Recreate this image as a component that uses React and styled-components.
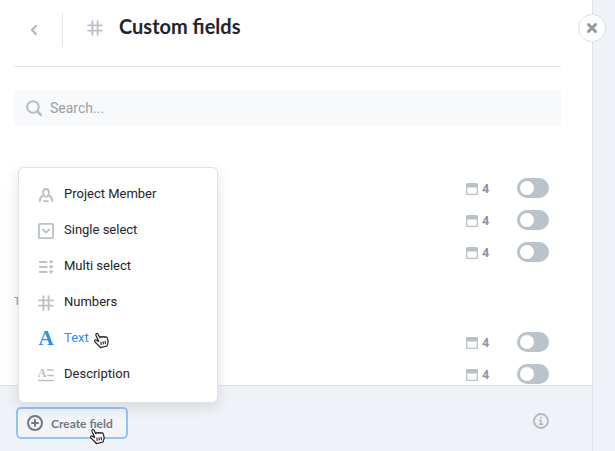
import React from "react";
import styled, { createGlobalStyle, css } from "styled-components";

const GlobalStyle = createGlobalStyle`
  *, *::before, *::after { box-sizing: border-box; }
  body {
    margin: 0;
    background: #eff3f7;
    color: #222429;
    font-family: Roboto, "Liberation Sans", sans-serif;
    font-size: 13px;
  }
  button, input { font: inherit; color: inherit; }
  svg { display: block; flex: none; overflow: visible; }
`;

const Page = styled.div`
  display: flex;
  height: 100vh;
  padding-right: 22px;
`;

const Panel = styled.section`
  position: relative;
  flex: 1;
  display: flex;
  flex-direction: column;
  min-width: 0;
  background: #fff;
  border-right: 1px solid #dce2e8;
`;

const CloseButton = styled.button`
  position: absolute;
  top: 14px;
  right: -14px;
  width: 28px;
  height: 28px;
  display: grid;
  place-items: center;
  padding: 0;
  border: 1px solid #dce0e5;
  border-radius: 50%;
  background: #fff;
  color: #8f98a3;
`;

const Header = styled.header`
  display: flex;
  align-items: center;
  margin: 0 31px 0 14px;
  padding: 9px 0 19px;
  border-bottom: 1px solid #dfe1e5;
  color: #bac2cb;
`;

const BackButton = styled.button`
  width: 49px;
  height: 34px;
  display: flex;
  align-items: center;
  margin: 4px 24px 0 0;
  padding: 0 0 0 15px;
  border: 0;
  border-right: 1px solid #dfe1e5;
  background: none;
  color: #b4bcc5;
`;

const Title = styled.h1`
  margin: 0 0 4px 16px;
  font-family: Lato, sans-serif;
  font-size: 20px;
  line-height: 24px;
  font-weight: 700;
  color: #222429;
`;

const Content = styled.div`
  flex: 1;
  min-height: 0;
  overflow: hidden;
  padding: 23px 31px 0 14px;
`;

const SearchBox = styled.label`
  display: flex;
  align-items: center;
  gap: 8px;
  height: 36px;
  padding: 0 12px;
  border-radius: 3px;
  background: #f8f9fb;
  color: #b5bcc4;
`;

const SearchInput = styled.input`
  flex: 1;
  min-width: 0;
  padding: 0;
  border: 0;
  outline: 0;
  background: none;
  font-size: 14px;
  color: #222429;
  &::placeholder { color: #9a9fa6; opacity: 1; }
`;

const FieldList = styled.ul`
  list-style: none;
  margin: 0;
  padding: 46px 12px 0 0;
  h2 + & { padding-top: 16px; }
`;

const SectionLabel = styled.h2`
  margin: 26px 0 0;
  font-size: 11px;
  line-height: 16px;
  font-weight: 500;
  color: #9aa1aa;
`;

const FieldRow = styled.li`
  display: flex;
  align-items: center;
  justify-content: flex-end;
  height: 32px;
`;

const Usage = styled.span`
  display: flex;
  align-items: center;
  gap: 4px;
  margin-right: 28px;
  padding-top: 2px;
  font-family: "Open Sans", sans-serif;
  font-size: 12px;
  line-height: 16px;
  font-weight: 700;
  color: #8c959f;
`;

const Toggle = styled.input`
  appearance: none;
  width: 32px;
  height: 20px;
  margin: 0;
  padding: 3px;
  border-radius: 10px;
  background: #bac3cb;
  &::before {
    content: "";
    display: block;
    width: 14px;
    height: 14px;
    border-radius: 50%;
    background: #fff;
  }
  &:checked { background: #2f8fea; }
  &:checked::before { margin-left: 12px; }
`;

const Footer = styled.footer`
  display: flex;
  align-items: center;
  justify-content: space-between;
  padding: 21px 43px 12px 16px;
  border-top: 1px solid #dbe1e7;
  background: #eff3f7;
`;

const CreateArea = styled.div`
  position: relative;
`;

const CreateButton = styled.button`
  height: 32px;
  display: flex;
  align-items: center;
  gap: 8px;
  padding: 0 13px 0 9px;
  border: 2px solid #93c3f7;
  border-radius: 5px;
  background: #f1f4f8;
  font-family: Lato, sans-serif;
  font-size: 12px;
  font-weight: 700;
  color: #727983;
`;

const Menu = styled.ul`
  position: absolute;
  left: 2px;
  bottom: 36px;
  width: 200px;
  margin: 0;
  padding: 8px 0 10px;
  list-style: none;
  border: 1px solid #e0e2e6;
  border-radius: 6px;
  background: #fff;
  box-shadow: 0 4px 14px rgba(50, 60, 80, 0.14);
`;

const MenuItem = styled.button`
  display: flex;
  align-items: center;
  width: 100%;
  height: 36px;
  padding: 2px 19px 0;
  border: 0;
  background: none;
  color: #bac1c9;
  ${(p) => p.$active && css`color: #2e8eea;`}
`;

const MenuText = styled.span`
  margin-left: 10px;
  padding-bottom: 3px;
  color: ${(p) => (p.$active ? "#2e8eea" : "#222429")};
`;

const MenuPointer = styled.span`
  margin: 2px 0 0 5px;
`;

const ButtonPointer = styled.span`
  position: absolute;
  right: 23px;
  bottom: -6px;
`;

const InfoButton = styled.button`
  padding: 0;
  margin-bottom: 4px;
  border: 0;
  background: none;
  color: #b5b9be;
`;

const Icon = ({ size = 16, width = 2, children }) => (
  <svg width={size} height={size} viewBox={`0 0 ${size} ${size}`} fill="none" stroke="currentColor"
    strokeWidth={width} strokeLinecap="round" strokeLinejoin="round" aria-hidden="true">
    {children}
  </svg>
);

const HashIcon = () => (
  <Icon width={1.9}><path d="M5.4 1.1v13.8M10.6 1.1v13.8M1.1 5.4h13.8M1.1 10.6h13.8" /></Icon>
);

const MemberIcon = () => (
  <Icon width={1.9}>
    <path d="M8 2C5.9 2 5.1 3.4 5.1 5.6s1.2 4.3 2.9 4.3 2.9-2.1 2.9-4.3S10.1 2 8 2Z" />
    <path d="M4.6 9C2.9 9.7 1.9 10.9 1.8 14M11.4 9c1.7.7 2.7 1.9 2.8 5" />
    <path d="M5.8 14.1h4.4" strokeWidth="1.7" />
  </Icon>
);

const SingleIcon = () => (
  <Icon width={1.9}>
    <rect x="0.9" y="0.9" width="14.2" height="14.2" rx="1" />
    <path d="m4.9 6.6 3.1 3.1 3.1-3.1" />
  </Icon>
);

const MultiIcon = () => (
  <Icon width={1.9}>
    <path d="M1.8 3h6.8M1.8 8h6.8M1.8 13h6.8" />
    <path d="M11.6 2.2h3L13.1 4ZM11.6 7.2h3L13.1 9ZM11.6 12.2h3L13.1 14Z" fill="currentColor" strokeWidth="1.2" />
  </Icon>
);

const TextIcon = () => (
  <Icon>
    <text x="8" y="14" textAnchor="middle" fill="currentColor" stroke="none"
      fontFamily="Liberation Serif, serif" fontWeight="700" fontSize="21">A</text>
  </Icon>
);

const DescriptionIcon = () => (
  <Icon width={1.7}>
    <text x="4" y="10" textAnchor="middle" fill="currentColor" stroke="none"
      fontFamily="Liberation Serif, serif" fontWeight="700" fontSize="12">A</text>
    <path d="M9.2 3h6.4M9.2 8.5h6.4M.2 13.5h15.6" strokeLinecap="butt" />
  </Icon>
);

const CardIcon = () => (
  <Icon size={12} width={1}>
    <path fill="currentColor" stroke="none" fillRule="evenodd"
      d="M1.5 0h9A1.5 1.5 0 0 1 12 1.5v9a1.5 1.5 0 0 1-1.5 1.5h-9A1.5 1.5 0 0 1 0 10.5v-9A1.5 1.5 0 0 1 1.5 0ZM1.3 4.4v5.6a.7.7 0 0 0 .7.7h8a.7.7 0 0 0 .7-.7V4.4Z" />
  </Icon>
);

const CardTint = styled.span`
  color: #b8c0c8;
`;

const HandPointer = () => (
  <svg width="15" height="17" viewBox="0 0 15 17" fill="#fff" stroke="#222" strokeWidth="1.2"
    strokeLinejoin="round" aria-hidden="true">
    <path d="M4.4 8.8 2 3.4C1.3 1.6 3.3.6 4.1 2.2l1.7 3.5c.2-1.3 2.1-1.5 2.6-.3.3-1.1 2.1-1.1 2.5.1.6-1 2.1-.7 2.4.5.5 1.6.9 3.2.7 4.8-.1 1.2-.9 1.9-.9 3.2L6.4 15.7c-.6-1.3-1.7-1.9-2.6-3L.9 9.9C0 8.6 1.3 7.5 2.6 8.2L4.6 9.6Z" />
    <path d="m6.8 9.6.5 3.3M9 9.4l.4 3M11 8.9l.5 3.2" fill="none" strokeWidth="1.1" />
  </svg>
);

const MENU = [
  ["Project Member", MemberIcon],
  ["Single select", SingleIcon],
  ["Multi select", MultiIcon],
  ["Numbers", HashIcon],
  ["Text", TextIcon],
  ["Description", DescriptionIcon],
];

function Fields({ count }) {
  return (
    <FieldList>
      {Array.from({ length: count }, (_, i) => (
        <FieldRow key={i}>
          <Usage><CardTint><CardIcon /></CardTint>4</Usage>
          <Toggle type="checkbox" role="switch" aria-label="Enable field" />
        </FieldRow>
      ))}
    </FieldList>
  );
}

export default function App() {
  const active = "Text";
  return (
    <>
      <GlobalStyle />
      <Page>
        <Panel>
          <Header>
            <BackButton aria-label="Back">
              <Icon size={10} width={2.4}><path d="M6.8 1.2 3 5l3.8 3.8" /></Icon>
            </BackButton>
            <HashIcon />
            <Title>Custom fields</Title>
          </Header>
          <Content>
            <SearchBox>
              <Icon width={2}><circle cx="7" cy="7" r="5.8" /><path d="m11.4 11.4 3.4 3.4" strokeWidth="2.6" /></Icon>
              <SearchInput type="search" placeholder="Search..." aria-label="Search" />
            </SearchBox>
            <Fields count={3} />
            <SectionLabel>T</SectionLabel>
            <Fields count={2} />
          </Content>
          <Footer>
            <CreateArea>
              <CreateButton aria-expanded="true">
                <Icon width={2}><circle cx="8" cy="8" r="7" /><path d="M8 5v6M5 8h6" /></Icon>
                Create field
              </CreateButton>
              <Menu>
                {MENU.map(([label, Glyph]) => (
                  <li key={label}>
                    <MenuItem $active={label === active}>
                      <Glyph />
                      <MenuText $active={label === active}>{label}</MenuText>
                      {label === active && <MenuPointer><HandPointer /></MenuPointer>}
                    </MenuItem>
                  </li>
                ))}
              </Menu>
              <ButtonPointer><HandPointer /></ButtonPointer>
            </CreateArea>
            <InfoButton aria-label="Information">
              <Icon width={1.9}>
                <circle cx="8" cy="8" r="7" />
                <path d="M6.8 7.3H8v3.8M6.7 11.3h2.8M8 4.5v.2" strokeLinecap="square" strokeWidth="1.4" />
              </Icon>
            </InfoButton>
          </Footer>
          <CloseButton aria-label="Close">
            <Icon size={12} width={3}><path d="m2.5 2.5 7 7M9.5 2.5l-7 7" /></Icon>
          </CloseButton>
        </Panel>
      </Page>
    </>
  );
}
